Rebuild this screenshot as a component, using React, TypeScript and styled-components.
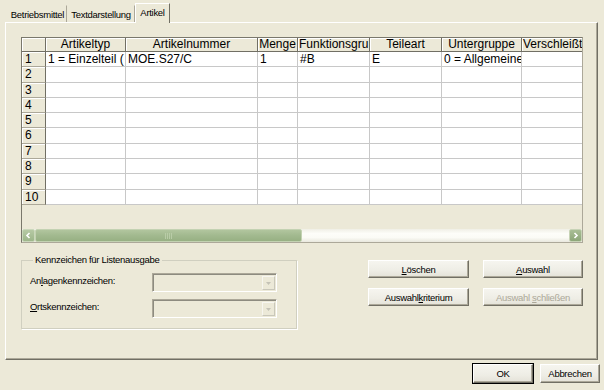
import React from "react";
import styled, { createGlobalStyle } from "styled-components";

const GlobalStyle = createGlobalStyle`
  html, body {
    margin: 0;
    padding: 0;
    background: #ece9d8;
  }
  #root {
    width: 604px;
    height: 390px;
  }
`;

const uiFont = `"Liberation Sans", Arial, sans-serif`;
const gridFont = `"Liberation Sans", Arial, sans-serif`;

const Window = styled.div`
  width: 604px;
  height: 390px;
  background: #ece9d8;
  display: flex;
  flex-direction: column;
  overflow: hidden;
  font-family: ${uiFont};
  font-size: 9.5px;
  letter-spacing: -0.3px;
  color: #000;
`;

const TabStrip = styled.div`
  display: flex;
  align-items: flex-end;
  height: 22px;
  padding-left: 8px;
  box-sizing: border-box;
  position: relative;
  z-index: 1;
`;

const Tab = styled.div<{ $w: number; $active?: boolean }>`
  width: ${(p) => p.$w}px;
  height: ${(p) => (p.$active ? 20 : 17)}px;
  margin-bottom: ${(p) => (p.$active ? -1 : 0)}px;
  box-sizing: border-box;
  display: flex;
  align-items: center;
  justify-content: center;
  padding-bottom: ${(p) => (p.$active ? 3 : 0)}px;
  background: #ece9d8;
  border-top: 1px solid ${(p) => (p.$active ? "#fff" : "transparent")};
  border-left: 1px solid ${(p) => (p.$active ? "#fff" : "transparent")};
  border-right: 1px solid ${(p) => (p.$active ? "#716f64" : "#aca899")};
  white-space: nowrap;
`;

const Panel = styled.div`
  margin-left: 5px;
  width: 593px;
  height: 338px;
  box-sizing: border-box;
  border-top: 1px solid #fff;
  border-left: 1px solid #fff;
  border-right: 1px solid #716f64;
  border-bottom: 1px solid #716f64;
  box-shadow: inset -1px -1px 0 #aca899;
  padding: 14px 14px 0 15px;
  display: flex;
  flex-direction: column;
`;

const GridFrame = styled.div`
  width: 562px;
  height: 206px;
  box-sizing: border-box;
  border: 1px solid #7a786c;
  border-right-color: #aca899;
  border-bottom-color: #aca899;
  display: flex;
  flex-direction: column;
  overflow: hidden;
  font-family: ${gridFont};
  font-size: 12px;
  letter-spacing: 0;
`;

const cols = "24px 80px 132px 40px 72px 72px 80px 80px";

const HeadRow = styled.div`
  display: grid;
  grid-template-columns: ${cols};
  height: 14px;
  flex: none;
`;

const HeadCell = styled.div<{ $left?: boolean }>`
  box-sizing: border-box;
  background: #ece9d8;
  border-right: 1px solid #716f64;
  border-bottom: 1px solid #716f64;
  box-shadow: inset 1px 1px 0 #fff;
  text-align: ${(p) => (p.$left ? "left" : "center")};
  padding-left: ${(p) => (p.$left ? 1 : 0)}px;
  line-height: 13px;
  overflow: hidden;
  white-space: nowrap;
`;

const Body = styled.div`
  display: grid;
  grid-template-columns: ${cols};
  grid-auto-rows: 15.3px;
  flex: none;
`;

const RowHead = styled.div`
  box-sizing: border-box;
  background: #ece9d8;
  border-right: 1px solid #716f64;
  border-bottom: 1px solid #aca899;
  box-shadow: inset 1px 1px 0 #fff;
  padding-left: 3px;
  line-height: 14px;
  overflow: hidden;
  white-space: nowrap;
`;

const Cell = styled.div`
  box-sizing: border-box;
  background: #fff;
  border-right: 1px solid #c8c8c8;
  border-bottom: 1px solid #c8c8c8;
  padding-left: 2px;
  line-height: 14px;
  overflow: hidden;
  white-space: nowrap;
`;

const Filler = styled.div`
  flex: 1;
`;

const HScroll = styled.div`
  height: 13px;
  flex: none;
  display: flex;
  background: linear-gradient(to bottom, #f0efe6 0%, #fdfdf9 35%, #fbfbf6 65%, #e9e8de 100%);
`;

const ScrollArrow = styled.div<{ $dark?: boolean }>`
  width: 13px;
  height: 13px;
  box-sizing: border-box;
  border: 1px solid ${(p) => (p.$dark ? "#c7d3b6" : "#cad8bb")};
  border-radius: 2px;
  background: ${(p) =>
    p.$dark
      ? "linear-gradient(to bottom, #a9be96, #8ca678)"
      : "linear-gradient(to bottom, #b6c9a4, #9db68a)"};
  display: flex;
  align-items: center;
  justify-content: center;
`;

const Thumb = styled.div`
  width: 267px;
  height: 13px;
  box-sizing: border-box;
  border: 1px solid #c3d2b2;
  border-radius: 2px;
  background: linear-gradient(to bottom, #b1c59e 0%, #a2b98f 50%, #97b083 100%);
  display: flex;
  align-items: center;
  justify-content: center;
  gap: 1px;
`;

const Grip = styled.div`
  width: 1px;
  height: 6px;
  background: #b9cca7;
`;

const Track = styled.div`
  flex: 1;
`;

const Lower = styled.div`
  margin-top: 11px;
  display: flex;
  justify-content: space-between;
  align-items: flex-start;
`;

const Group = styled.fieldset`
  margin: 0;
  width: 276px;
  box-sizing: border-box;
  border: 1px solid #d0cfc0;
  box-shadow: 1px 1px 0 #fff;
  padding: 7px 19px 10px 8px;
  display: grid;
  grid-template-columns: 122px 125px;
  row-gap: 7px;
  align-items: center;
`;

const Legend = styled.legend`
  margin-left: 3px;
  padding: 0 3px 0 2px;
  line-height: 12px;
`;

const FieldLabel = styled.label`
  white-space: nowrap;
  margin-top: -4px;
`;

const Combo = styled.div`
  height: 19px;
  box-sizing: border-box;
  border: 1px solid;
  border-color: #aca899 #fff #fff #aca899;
  box-shadow: inset 1px 1px 0 #8d8b80;
  background: #ece9d8;
  display: flex;
  justify-content: flex-end;
  padding: 2px 1px 1px 2px;
`;

const DropBtn = styled.div`
  width: 13px;
  box-sizing: border-box;
  border: 1px solid;
  border-color: #f7f6f0 #c9c7ba #c9c7ba #f7f6f0;
  display: flex;
  align-items: center;
  justify-content: center;
`;

const ButtonGrid = styled.div`
  margin-top: 6px;
  display: grid;
  grid-template-columns: 101px 100px;
  column-gap: 14px;
  row-gap: 10px;
`;

const Button = styled.button<{ $w?: number; $default?: boolean }>`
  width: ${(p) => (p.$w ? `${p.$w}px` : "auto")};
  height: ${(p) => (p.$w ? 19 : 18)}px;
  box-sizing: border-box;
  margin: 0;
  padding: 0;
  font-family: ${uiFont};
  font-size: 9.5px;
  letter-spacing: -0.3px;
  color: #000;
  background: linear-gradient(to bottom, #f6f5ef 0%, #eeede5 60%, #e4e2d8 100%);
  border: 1px solid;
  border-color: #fff #716f64 #716f64 #fff;
  box-shadow: inset -1px -1px 0 #aca899;
  outline: ${(p) => (p.$default ? "1px solid #000" : "none")};
  outline-offset: 0;
  &:disabled {
    color: #aca899;
  }
`;

const Key = styled.span`
  text-decoration: underline;
`;

const Footer = styled.div`
  display: flex;
  justify-content: flex-end;
  gap: 7px;
  padding: 4px 4px 0 0;
`;

const LeftChevron = () => (
  <svg width="7" height="7" viewBox="0 0 7 7">
    <path d="M4.5 1 L2 3.5 L4.5 6" fill="none" stroke="#fff" strokeWidth="1.6" />
  </svg>
);

const RightChevron = () => (
  <svg width="7" height="7" viewBox="0 0 7 7">
    <path d="M2.5 1 L5 3.5 L2.5 6" fill="none" stroke="#fff" strokeWidth="1.6" />
  </svg>
);

const DownArrow = () => (
  <svg width="5" height="3" viewBox="0 0 5 3">
    <path d="M0 0 H5 L2.5 3 Z" fill="#c4c2b6" />
  </svg>
);

const headers: { t: string; left?: boolean }[] = [
  { t: "" },
  { t: "Artikeltyp" },
  { t: "Artikelnummer" },
  { t: "Menge" },
  { t: "Funktionsgru", left: true },
  { t: "Teileart" },
  { t: "Untergruppe" },
  { t: "Verschleißt", left: true },
];

const rows: string[][] = [
  ["1 = Einzelteil (", "MOE.S27/C", "1", "#B", "E", "0 = Allgemeine", ""],
  ...Array.from({ length: 9 }, () => ["", "", "", "", "", "", ""]),
];

export default function App() {
  return (
    <Window>
      <GlobalStyle />
      <TabStrip>
        <Tab $w={59}>Betriebsmittel</Tab>
        <Tab $w={68}>Textdarstellung</Tab>
        <Tab $w={35} $active>
          Artikel
        </Tab>
      </TabStrip>
      <Panel>
        <GridFrame>
          <HeadRow>
            {headers.map((h, i) => (
              <HeadCell key={i} $left={h.left}>
                {h.t}
              </HeadCell>
            ))}
          </HeadRow>
          <Body>
            {rows.map((r, i) => (
              <React.Fragment key={i}>
                <RowHead>{i + 1}</RowHead>
                {r.map((c, j) => (
                  <Cell key={j}>{c}</Cell>
                ))}
              </React.Fragment>
            ))}
          </Body>
          <Filler />
          <HScroll>
            <ScrollArrow>
              <LeftChevron />
            </ScrollArrow>
            <Thumb>
              <Grip />
              <Grip />
              <Grip />
              <Grip />
            </Thumb>
            <Track />
            <ScrollArrow $dark>
              <RightChevron />
            </ScrollArrow>
          </HScroll>
        </GridFrame>
        <Lower>
          <Group>
            <Legend>Kennzeichen für Listenausgabe</Legend>
            <FieldLabel>
              An<Key>l</Key>agenkennzeichen:
            </FieldLabel>
            <Combo>
              <DropBtn>
                <DownArrow />
              </DropBtn>
            </Combo>
            <FieldLabel>
              <Key>O</Key>rtskennzeichen:
            </FieldLabel>
            <Combo>
              <DropBtn>
                <DownArrow />
              </DropBtn>
            </Combo>
          </Group>
          <ButtonGrid>
            <Button>
              <Key>L</Key>öschen
            </Button>
            <Button>
              <Key>A</Key>uswahl
            </Button>
            <Button>
              Auswahl<Key>k</Key>riterium
            </Button>
            <Button disabled>
              Auswahl <Key>s</Key>chließen
            </Button>
          </ButtonGrid>
        </Lower>
      </Panel>
      <Footer>
        <Button $w={60} $default>
          OK
        </Button>
        <Button $w={60}>Abbrechen</Button>
      </Footer>
    </Window>
  );
}
